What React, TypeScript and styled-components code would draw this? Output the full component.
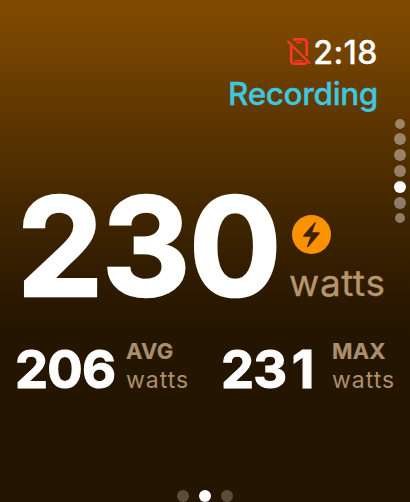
import React from "react";
import styled, { createGlobalStyle } from "styled-components";

const GlobalStyle = createGlobalStyle`
  * { box-sizing: border-box; }
  body { margin: 0; background: #241500; }
`;

const Screen = styled.main`
  position: relative;
  width: 410px;
  height: 502px;
  overflow: hidden;
  display: flex;
  flex-direction: column;
  font-family: Inter, "Liberation Sans", sans-serif;
  white-space: nowrap;
  color: #fff;
  background: linear-gradient(#804a00 0, #7a4700 30px, #5d3600 120px, #422600 210px, #2a1800 300px, #241500 335px);
`;

const Header = styled.header`
  display: flex;
  flex-direction: column;
  align-items: flex-end;
  padding: 32px 32px 0 0;
  height: 114px;
  font-size: 32px;
  line-height: 41px;
  font-weight: 500;
`;

const Clock = styled.div`
  display: flex;
  align-items: flex-start;
  gap: 1px;
`;

const Time = styled.span`
  letter-spacing: 0.5px;
  -webkit-text-stroke: 0.3px currentColor;
`;

const Status = styled.div`
  color: #3ec8e0;
  font-size: 31.5px;
  letter-spacing: -0.35px;
  -webkit-text-stroke: 0.3px currentColor;
`;

const PhoneOff = styled.svg`
  width: 26px;
  height: 30px;
  margin-top: 5px;
`;

const Primary = styled.section`
  display: flex;
  height: 140px;
  margin-top: 61px;
  padding-left: 17px;
`;

const PrimaryValue = styled.div`
  width: 272px;
  font-size: 137px;
  line-height: 142px;
  font-weight: 700;
  letter-spacing: -1.4px;
  -webkit-text-stroke: 2.6px currentColor;
`;

const PrimarySide = styled.div`
  display: flex;
  flex-direction: column;
  padding-top: 40px;
`;

const Badge = styled.svg`
  width: 39px;
  height: 39px;
  margin-left: 3px;
`;

const PrimaryUnit = styled.div`
  margin-top: 6px;
  font-size: 37px;
  line-height: 46px;
  letter-spacing: 0.6px;
  color: #b5956a;
  -webkit-text-stroke: 0.3px currentColor;
`;

const Stats = styled.section`
  display: grid;
  grid-template-columns: 206px 204px;
  margin-top: 22px;
  padding-left: 15px;
`;

const Stat = styled.div`
  display: flex;
`;

const StatValue = styled.div`
  width: 111px;
  padding-top: 6px;
  font-size: 52.5px;
  line-height: 53px;
  font-weight: 700;
  letter-spacing: -0.8px;
  -webkit-text-stroke: 1.1px currentColor;
`;

const LastDigit = styled.span<{ $narrow: boolean }>`
  margin-left: ${(p) => (p.$narrow ? 5.5 : 0)}px;
`;

const StatLabels = styled.div`
  color: #aa8f6c;
  line-height: 29px;
`;

const StatName = styled.div`
  font-size: 22px;
  font-weight: 700;
  letter-spacing: 0.2px;
  -webkit-text-stroke: 0.2px currentColor;
`;

const StatUnit = styled.div`
  font-size: 23px;
  letter-spacing: 1px;
`;

const Dot = styled.i<{ $active?: boolean; $small?: boolean; $dim?: boolean }>`
  width: ${(p) => (p.$small ? 10 : 12)}px;
  height: ${(p) => (p.$small ? 10 : 12)}px;
  border-radius: 50%;
  background: ${(p) => (p.$active ? "#fff" : p.$dim ? "#5b4c39" : "rgba(255,255,255,.4)")};
`;

const Pages = styled.nav`
  display: flex;
  justify-content: center;
  gap: 10px;
  margin-top: auto;
`;

const Crown = styled.nav`
  position: absolute;
  right: 4px;
  top: 119px;
  display: flex;
  flex-direction: column;
  align-items: center;
  gap: 4px;
`;

const StatBlock = ({ value, name }: { value: string; name: string }) => (
  <Stat>
    <StatValue>
      {value.slice(0, -1)}
      <LastDigit $narrow={value.endsWith("1")}>{value.slice(-1)}</LastDigit>
    </StatValue>
    <StatLabels>
      <StatName>{name}</StatName>
      <StatUnit>watts</StatUnit>
    </StatLabels>
  </Stat>
);

export default function App() {
  return (
    <>
      <GlobalStyle />
      <Screen>
        <Header>
          <Clock>
            <PhoneOff viewBox="0 0 26 30" fill="none" stroke="#ff3528">
              <path d="M5.2 9v14.5a3.2 3.2 0 0 0 3.2 3.2h9.5a3.2 3.2 0 0 0 2.8-1.6M7 2.7c.4-.2 1-.3 1.5-.3h9a3.2 3.2 0 0 1 3.2 3.2V19" strokeWidth="2.7" />
              <path d="M10.5 5.5h4.5M9 23.7h7" strokeWidth="1.6" strokeLinecap="round" />
              <path d="M2 4.5 23.5 26" strokeWidth="2.3" strokeLinecap="round" />
            </PhoneOff>
            <Time>2:18</Time>
          </Clock>
          <Status>Recording</Status>
        </Header>
        <Primary>
          <PrimaryValue>230</PrimaryValue>
          <PrimarySide>
            <Badge viewBox="0 0 39 39">
              <circle cx="19.5" cy="19.5" r="19.5" fill="#fa9200" />
              <path d="M22.5 7.4 11.3 20.4q-.8 1.4.6 1.4h6.7l-3.5 9.3q-.2 1.6 1.2.9l11.2-13.3q.7-1.3-.7-1.4h-6.6l3.5-9.2q0-1.5-1.2-.7z" fill="#3b2303" />
            </Badge>
            <PrimaryUnit>watts</PrimaryUnit>
          </PrimarySide>
        </Primary>
        <Stats>
          <StatBlock value="206" name="AVG" />
          <StatBlock value="231" name="MAX" />
        </Stats>
        <Pages>
          <Dot $dim />
          <Dot $active />
          <Dot $dim />
        </Pages>
        <Crown>
          <Dot $small />
          <Dot />
          <Dot />
          <Dot />
          <Dot $active />
          <Dot />
          <Dot $small />
        </Crown>
      </Screen>
    </>
  );
}
